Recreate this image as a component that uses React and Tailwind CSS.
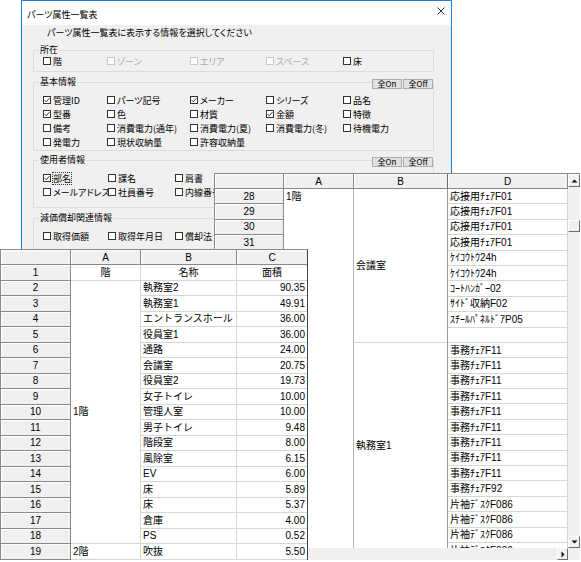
import React from 'react'

const SHEET = "font-['Liberation_Sans','Noto_Sans_CJK_JP',sans-serif] text-[10px] text-black"
const HEAD = 'flex items-center justify-center border-b border-r border-[#8a8a8a] bg-[#f0f0f0] shadow-[inset_1px_1px_0_#fff]'
const CELL = 'flex items-center border-b border-r border-[#d6d6d6] bg-white'

const basicRows = [
  [['管理ID', true], ['パーツ記号'], ['メーカー', true], ['シリーズ'], ['品名']],
  [['型番', true], ['色'], ['材質'], ['金額', true], ['特徴']],
  [['備考'], ['消費電力(通年)'], ['消費電力(夏)'], ['消費電力(冬)'], ['待機電力']],
  [['発電力'], ['現状収納量'], ['許容収納量']],
]

const areas = [
  ['執務室2', '90.35'],
  ['執務室1', '49.91'],
  ['エントランスホール', '36.00'],
  ['役員室1', '36.00'],
  ['通路', '24.00'],
  ['会議室', '20.75'],
  ['役員室2', '19.73'],
  ['女子トイレ', '10.00'],
  ['管理人室', '10.00'],
  ['男子トイレ', '9.48'],
  ['階段室', '8.00'],
  ['風除室', '6.15'],
  ['EV', '6.00'],
  ['床', '5.89'],
  ['床', '5.37'],
  ['倉庫', '4.00'],
  ['PS', '0.52'],
  ['吹抜', '5.50'],
]

const parts = [
  ...Array(4).fill('応接用ﾁｪｱF01'),
  'ｹｲｺｳﾄｳ24h',
  'ｹｲｺｳﾄｳ24h',
  'ｺｰﾄﾊﾝｶﾞｰ02',
  'ｻｲﾄﾞ収納F02',
  'ｽﾁｰﾙﾊﾟﾈﾙﾄﾞｱP05',
  '',
  ...Array(9).fill('事務ﾁｪｱF11'),
  '事務ﾁｪｱF92',
  ...Array(4).fill('片袖ﾃﾞｽｸF086'),
]

function Check({ label, checked, disabled, focus }) {
  return (
    <div className="flex items-center gap-[2px] whitespace-nowrap">
      <span
        className={`flex h-[8px] w-[8px] shrink-0 items-center justify-center border bg-white ${
          disabled ? 'border-[#c8c8c8]' : 'border-[#333]'
        }`}
      >
        {checked && (
          <svg width="6" height="6" viewBox="0 0 6 6">
            <path d="M0.6 3.1 L2.3 4.8 L5.4 1.1" fill="none" stroke="#222" strokeWidth="0.9" />
          </svg>
        )}
      </span>
      <span
        className={`leading-[11px] ${disabled ? 'text-[#a8a8a8]' : 'text-black'} ${
          focus ? 'outline outline-1 outline-dotted outline-[#333]' : ''
        }`}
      >
        {label}
      </span>
    </div>
  )
}

function Group({ title, buttons, className, children }) {
  return (
    <div className={`relative w-[401px] border border-[#dcdcdc] ${className}`}>
      <span className="absolute left-[5px] top-[-7px] bg-[#f0f0f0] px-[1px] leading-[12px]">{title}</span>
      {buttons && (
        <div className="absolute right-0 top-[-4px] flex gap-[1px]">
          {['全On', '全Off'].map((b) => (
            <div
              key={b}
              className="flex h-[10px] w-[30px] items-center justify-center border border-[#adadad] bg-[#e1e1e1] text-[8px] leading-[8px]"
            >
              {b}
            </div>
          ))}
        </div>
      )}
      {children}
    </div>
  )
}

function Dialog() {
  return (
    <div className="absolute left-[21px] top-0 h-[280px] w-[431px] border border-[#1a7fd4] bg-[#f0f0f0] font-['Noto_Sans_CJK_JP',sans-serif] text-[9px] text-black [font-feature-settings:'palt']">
      <div className="flex h-[24px] items-start justify-between bg-white pl-[5px] pr-[6px]">
        <span className="mt-[8px] leading-[12px]">パーツ属性一覧表</span>
        <svg className="mt-[6px]" width="8" height="8" viewBox="0 0 8 8">
          <path d="M0.5 0.5 L7.5 7.5 M7.5 0.5 L0.5 7.5" stroke="#111" strokeWidth="0.9" />
        </svg>
      </div>

      <div className="flex flex-col px-[11px]">
        <p className="ml-[14px] mt-[2px] h-[12px] leading-[12px]">パーツ属性一覧表に表示する情報を選択してください</p>

        <Group title="所在" className="mt-[11px] h-[22px]">
          <div className="grid h-full grid-cols-[64px_83px_76px_77px_1fr] items-center pl-[9px]">
            <Check label="階" />
            <Check label="ゾーン" disabled />
            <Check label="エリア" disabled />
            <Check label="スペース" disabled />
            <Check label="床" />
          </div>
        </Group>

        <Group title="基本情報" buttons className="mt-[10px] pb-[1px] pt-[10px]">
          {basicRows.map((row, i) => (
            <div key={i} className="grid h-[14px] grid-cols-[64px_83px_76px_77px_1fr] items-center pl-[9px]">
              {row.map(([l, c]) => (
                <Check key={l} label={l} checked={c} />
              ))}
            </div>
          ))}
        </Group>

        <Group title="使用者情報" buttons className="mt-[9px] pb-[8px] pt-[10px]">
          <div className="grid h-[14px] grid-cols-[65px_67px_1fr] items-center pl-[9px]">
            <Check label="部名" checked focus />
            <Check label="課名" />
            <Check label="肩書" />
          </div>
          <div className="grid h-[14px] grid-cols-[65px_67px_1fr] items-center pl-[9px]">
            <Check label="メールアドレス" />
            <Check label="社員番号" />
            <Check label="内線番号" />
          </div>
        </Group>

        <Group title="減価償却関連情報" className="mt-[10px] h-[40px] pt-[10px]">
          <div className="grid h-[14px] grid-cols-[65px_67px_1fr] items-center pl-[9px]">
            <Check label="取得価額" />
            <Check label="取得年月日" />
            <Check label="償却法" />
          </div>
        </Group>
      </div>
    </div>
  )
}

function Arrow({ dir }) {
  const d = {
    up: 'M3.5 0.5 L6.5 3.5 H0.5 Z',
    down: 'M0.5 0.5 H6.5 L3.5 3.5 Z',
    right: 'M0.5 0.5 L3.5 3.5 L0.5 6.5 Z',
  }[dir]
  const horiz = dir === 'right'
  return (
    <svg width={horiz ? 4 : 7} height={horiz ? 7 : 4} viewBox={horiz ? '0 0 4 7' : '0 0 7 4'}>
      <path d={d} fill="#111" />
    </svg>
  )
}

const BEVEL = 'flex items-center justify-center border border-b-[#6d6d6d] border-l-white border-r-[#6d6d6d] border-t-white bg-[#f0f0f0]'

function RightSheet() {
  return (
    <div className={`absolute left-[214px] top-[173px] flex h-[387px] w-[366px] flex-col border-l border-t border-[#8a8a8a] bg-white ${SHEET}`}>
      <div className="flex min-h-0 flex-1">
        <div className="flex w-[353px] flex-col overflow-hidden">
          <div className="flex h-[15px] shrink-0">
            <div className={`${HEAD} w-[69px]`} />
            <div className={`${HEAD} w-[70px]`}>A</div>
            <div className={`${HEAD} w-[94px] border-r-[#6d6d6d]`}>B</div>
            <div className={`${HEAD} w-[120px]`}>D</div>
          </div>
          <div className="flex">
            <div className="flex w-[69px] flex-col">
              {parts.slice(0, 23).map((_, i) => (
                <div key={i} className={`${HEAD} h-[15.4px] shrink-0`}>
                  {28 + i}
                </div>
              ))}
            </div>
            <div className="w-[70px] border-r border-[#b4b4b4]">
              <div className="flex h-[15.4px] items-center pl-[2px]">1階</div>
            </div>
            <div className="flex w-[94px] flex-col border-r border-[#9a9a9a]">
              <div className="flex h-[154px] shrink-0 items-center border-b border-[#d6d6d6] pl-[2px]">会議室</div>
              <div className="flex h-[204px] shrink-0 items-center pl-[2px]">執務室1</div>
            </div>
            <div className="flex w-[120px] flex-col">
              {parts.map((p, i) => (
                <div key={i} className={`${CELL} h-[15.4px] shrink-0 whitespace-nowrap pl-[2px]`}>
                  {p}
                </div>
              ))}
            </div>
          </div>
        </div>
        <div className="flex w-[12px] flex-col bg-[#f0f0f0]">
          <div className={`${BEVEL} h-[13px]`}>
            <Arrow dir="up" />
          </div>
          <div className="h-[33px]" />
          <div className={`${BEVEL} h-[12px]`} />
          <div className="flex-1" />
          <div className={`${BEVEL} h-[12px]`}>
            <Arrow dir="down" />
          </div>
        </div>
      </div>
      <div className="flex h-[12px] shrink-0 bg-[#f0f0f0]">
        <div className="flex-1" />
        <div className={`${BEVEL} w-[11px]`}>
          <Arrow dir="right" />
        </div>
        <div className="w-[12px] bg-[#f0f0f0]" />
      </div>
    </div>
  )
}

function LeftSheet() {
  return (
    <div className={`absolute left-0 top-[249px] w-[308px] border-l border-r border-t border-l-[#8a8a8a] border-r-[#444] border-t-[#8a8a8a] bg-white ${SHEET}`}>
      <div className="flex h-[15px]">
        <div className={`${HEAD} w-[70px]`} />
        <div className={`${HEAD} w-[70px]`}>A</div>
        <div className={`${HEAD} w-[96px]`}>B</div>
        <div className={`${HEAD} w-[70px] border-r-0`}>C</div>
      </div>
      <div className="flex">
        <div className="flex w-[70px] flex-col">
          {Array.from({ length: 19 }, (_, i) => (
            <div key={i} className={`${HEAD} h-[15.5px] shrink-0`}>
              {i + 1}
            </div>
          ))}
        </div>
        <div className="flex w-[70px] flex-col">
          <div className={`${CELL} h-[15.5px] justify-center`}>階</div>
          <div className={`${CELL} h-[263.5px] pl-[2px]`}>1階</div>
          <div className={`${CELL} h-[15.5px] pl-[2px]`}>2階</div>
        </div>
        <div className="flex w-[96px] flex-col">
          <div className={`${CELL} h-[15.5px] justify-center`}>名称</div>
          {areas.map(([n], i) => (
            <div key={i} className={`${CELL} h-[15.5px] whitespace-nowrap pl-[2px]`}>
              {n}
            </div>
          ))}
        </div>
        <div className="flex w-[70px] flex-col">
          <div className={`${CELL} h-[15.5px] justify-center border-r-0`}>面積</div>
          {areas.map(([, v], i) => (
            <div key={i} className={`${CELL} h-[15.5px] justify-end border-r-0 pr-[2px]`}>
              {v}
            </div>
          ))}
        </div>
      </div>
    </div>
  )
}

export default function App() {
  return (
    <div className="relative h-[562px] w-[581px] overflow-hidden bg-white">
      <Dialog />
      <RightSheet />
      <LeftSheet />
    </div>
  )
}
